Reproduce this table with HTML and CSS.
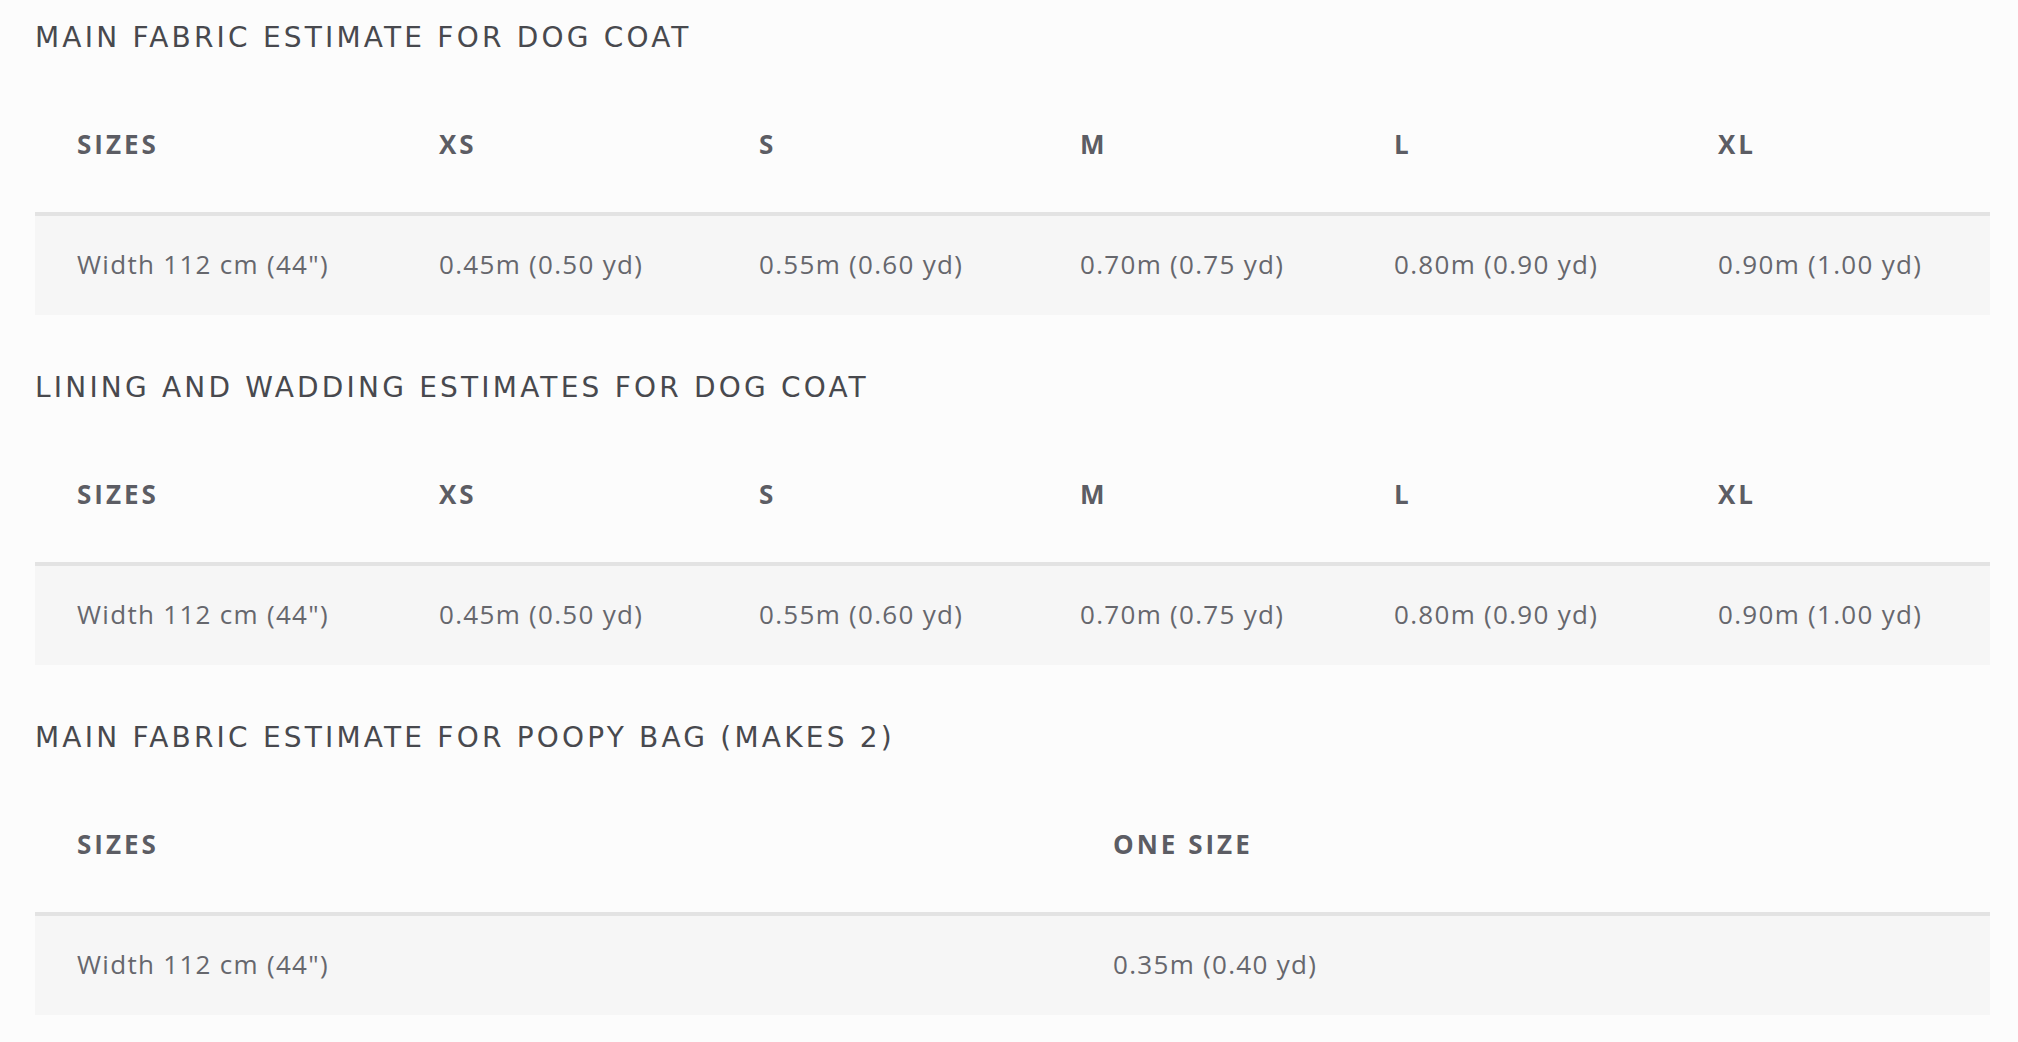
FILE: index.html
```html
<!DOCTYPE html>
<html lang="en">
<head>
<meta charset="utf-8">
<title>Fabric estimates</title>
<link rel="stylesheet" href="styles.css">
</head>
<body>
<main class="page">
  <section class="block">
    <h2 class="title">MAIN FABRIC ESTIMATE FOR DOG COAT</h2>
    <table class="est six">
      <thead>
        <tr><th class="c1">SIZES</th><th class="c2">XS</th><th class="c3">S</th><th class="c4">M</th><th class="c5">L</th><th class="c6">XL</th></tr>
      </thead>
      <tbody>
        <tr><td>Width 112 cm (44")</td><td>0.45m (0.50 yd)</td><td>0.55m (0.60 yd)</td><td>0.70m (0.75 yd)</td><td>0.80m (0.90 yd)</td><td>0.90m (1.00 yd)</td></tr>
      </tbody>
    </table>
  </section>
  <section class="block">
    <h2 class="title">LINING AND WADDING ESTIMATES FOR DOG COAT</h2>
    <table class="est six">
      <thead>
        <tr><th class="c1">SIZES</th><th class="c2">XS</th><th class="c3">S</th><th class="c4">M</th><th class="c5">L</th><th class="c6">XL</th></tr>
      </thead>
      <tbody>
        <tr><td>Width 112 cm (44")</td><td>0.45m (0.50 yd)</td><td>0.55m (0.60 yd)</td><td>0.70m (0.75 yd)</td><td>0.80m (0.90 yd)</td><td>0.90m (1.00 yd)</td></tr>
      </tbody>
    </table>
  </section>
  <section class="block">
    <h2 class="title">MAIN FABRIC ESTIMATE FOR POOPY BAG (MAKES 2)</h2>
    <table class="est two">
      <thead>
        <tr><th class="w1">SIZES</th><th class="w2">ONE SIZE</th></tr>
      </thead>
      <tbody>
        <tr><td>Width 112 cm (44")</td><td>0.35m (0.40 yd)</td></tr>
      </tbody>
    </table>
  </section>
</main>
</body>
</html>
```
FILE: styles.css
```css
html, body {
  margin: 0;
  padding: 0;
  background: #fcfcfc;
}
.page {
  padding: 18px 0 0 35px;
  width: 1955px;
}
.block {
  margin-bottom: 53px;
}
.title {
  margin: 0 0 21px 0;
  font-family: "DejaVu Sans", "Open Sans", sans-serif;
  font-weight: 400;
  font-size: 28px;
  line-height: 40px;
  letter-spacing: 3.2px;
  color: #48494e;
}
.est {
  width: 1955px;
  border-collapse: collapse;
  table-layout: fixed;
  font-family: "Open Sans", "Lato", sans-serif;
}
.est th,
.est td {
  box-sizing: border-box;
}
.est th {
  text-align: left;
  font-weight: 700;
  font-size: 26px;
  line-height: 30px;
  letter-spacing: 3px;
  color: #5c5d64;
  padding: 50px 0 53px 42px;
  border-bottom: 4px solid #e3e3e3;
}
.est td {
  text-align: left;
  font-weight: 400;
  font-size: 26px;
  line-height: 30px;
  letter-spacing: 1.3px;
  color: #66676d;
  padding: 33px 0 36px 42px;
  background: #f6f6f6;
}
.c1 { width: 362px; }
.c2 { width: 320px; }
.c3 { width: 321px; }
.c4 { width: 314px; }
.c5 { width: 324px; }
.c6 { width: 314px; }
.w1 { width: 1036px; }
.w2 { width: 919px; }
```
